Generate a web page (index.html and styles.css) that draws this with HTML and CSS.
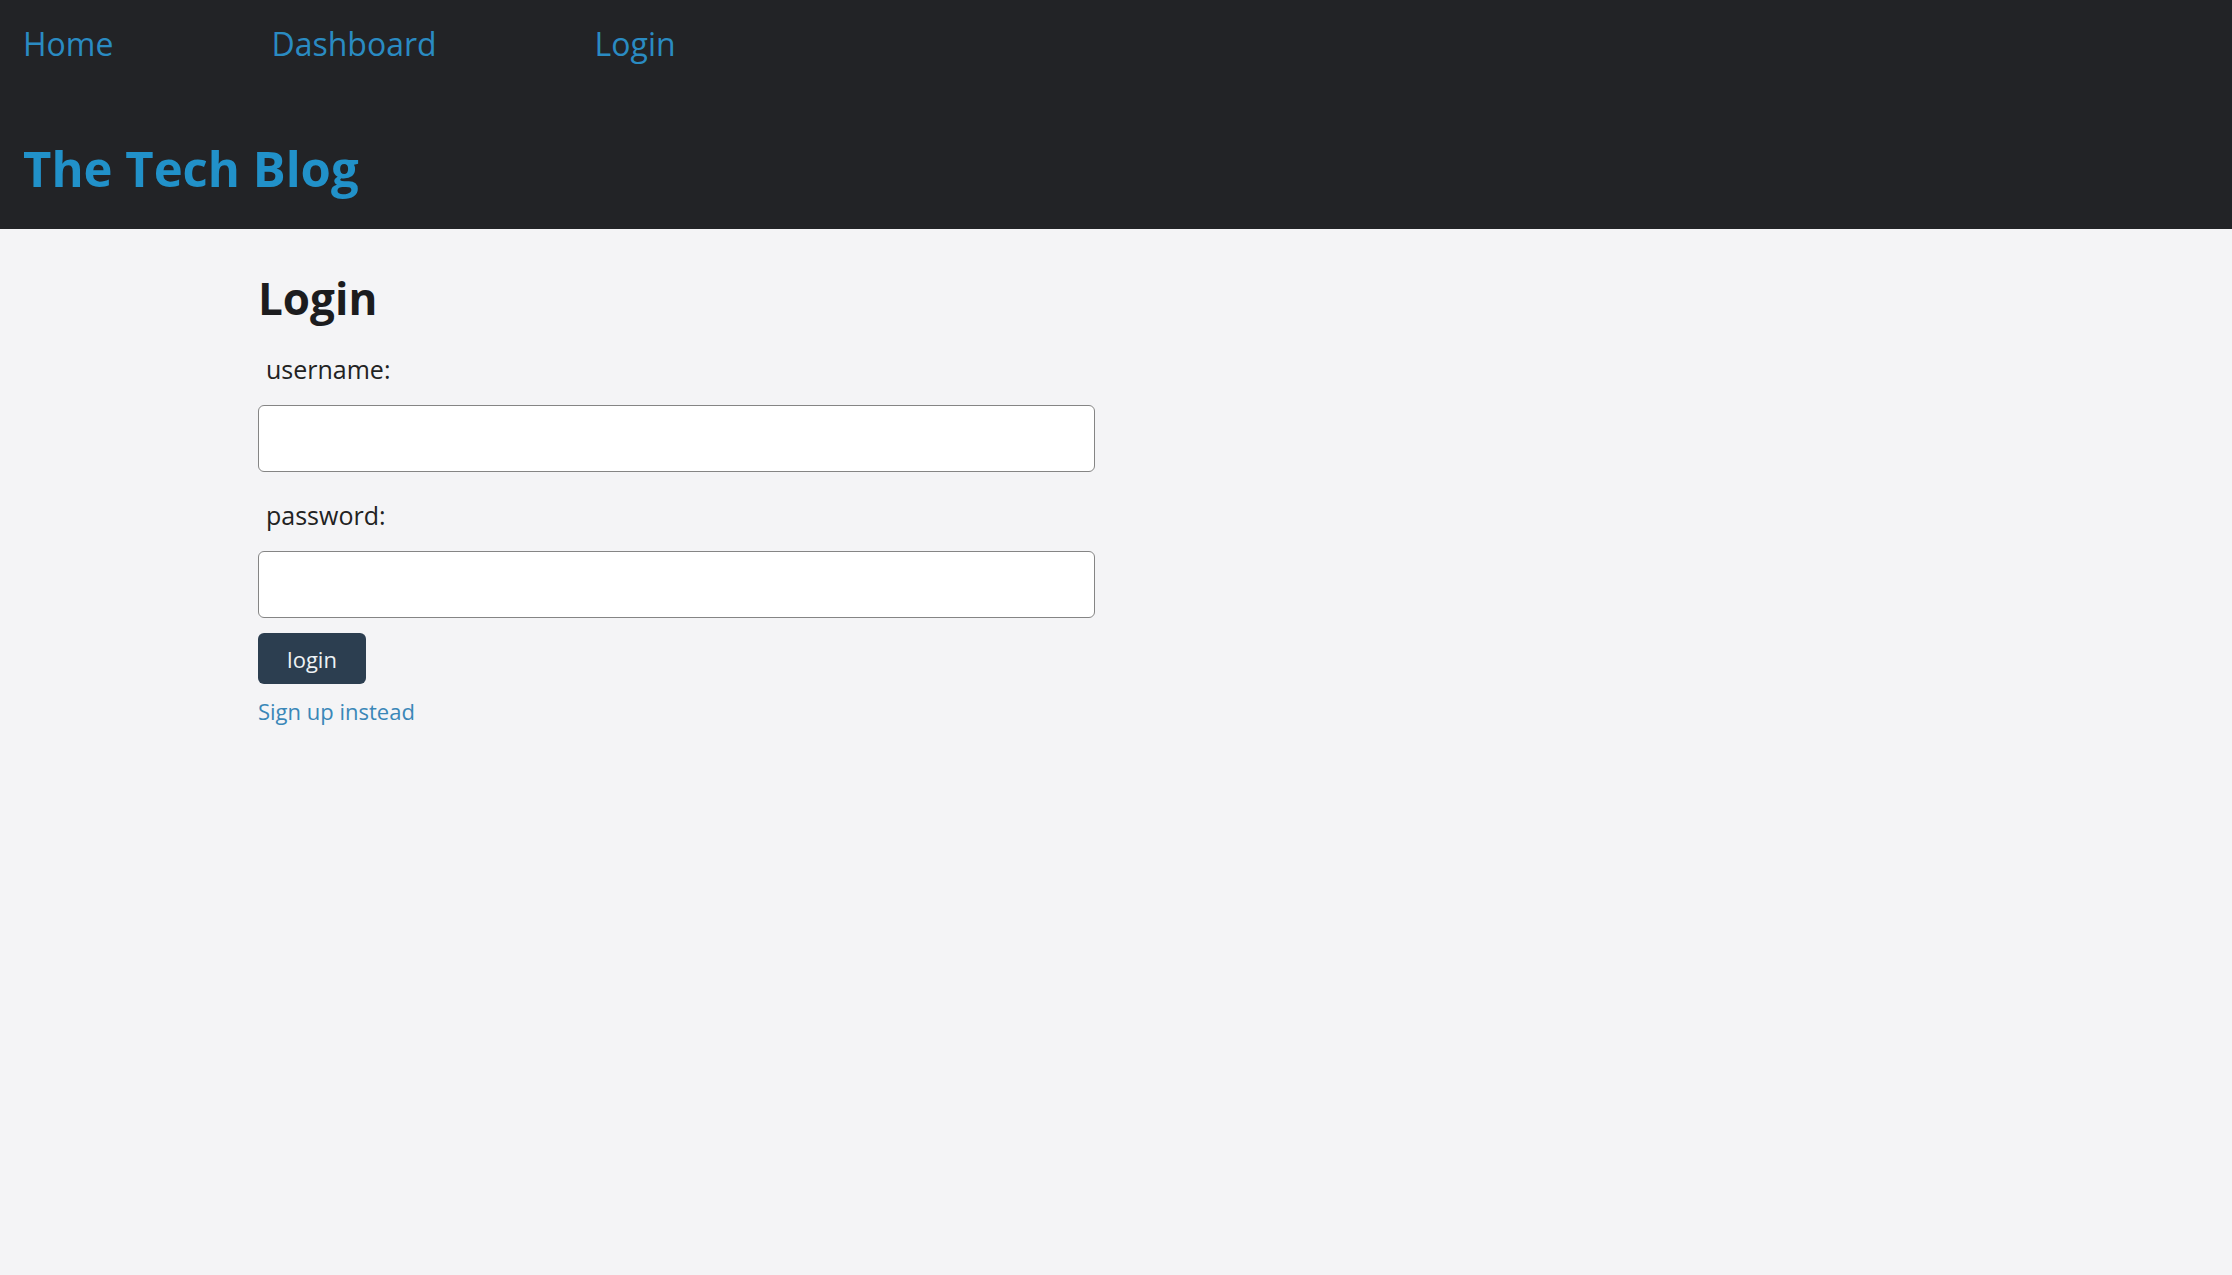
FILE: index.html
```html
<!DOCTYPE html>
<html lang="en">
<head>
<meta charset="utf-8">
<title>The Tech Blog</title>
<link rel="stylesheet" href="styles.css">
</head>
<body>
<header class="site-header">
  <nav class="nav">
    <a class="nav-link" href="#">Home</a>
    <a class="nav-link" href="#">Dashboard</a>
    <a class="nav-link" href="#">Login</a>
  </nav>
  <h1 class="site-title">The Tech Blog</h1>
</header>
<main class="content">
  <h2 class="page-title">Login</h2>
  <form class="login-form">
    <label class="field-label" for="username">username:</label>
    <input class="field-input" id="username" type="text">
    <label class="field-label" for="password">password:</label>
    <input class="field-input" id="password" type="password">
    <button class="btn" type="submit">login</button>
  </form>
  <a class="alt-link" href="#">Sign up instead</a>
</main>
</body>
</html>
```
FILE: styles.css
```css
html, body {
  margin: 0;
  padding: 0;
}
body {
  background: #f4f4f6;
  font-family: "Open Sans", "Noto Sans", sans-serif;
  color: #1f1f21;
  min-height: 1275px;
}
.site-header {
  background: #222326;
  height: 229px;
  box-sizing: border-box;
  padding: 15px 0 0 23px;
}
.nav {
  display: flex;
  gap: 158px;
}
.nav-link {
  color: #2a8bc2;
  text-decoration: none;
  font-size: 32px;
  line-height: 58px;
}
.site-title {
  margin: 65px 0 0 0;
  color: #2191c9;
  font-size: 49px;
  font-weight: 700;
  line-height: 60px;
}
.content {
  padding: 0 0 0 258px;
}
.page-title {
  margin: 0;
  padding-top: 41px;
  font-size: 44px;
  font-weight: 700;
  line-height: 56px;
  color: #1c1c1e;
}
.login-form {
  display: flex;
  flex-direction: column;
  align-items: flex-start;
  width: 837px;
}
.field-label {
  font-size: 25px;
  line-height: 36px;
  margin: 25px 0 0 8px;
  color: #222;
}
.field-input {
  box-sizing: border-box;
  width: 837px;
  height: 67px;
  margin: 18px 0 0 0;
  border: 1.5px solid #858585;
  border-radius: 6px;
  background: #fff;
  font: inherit;
}
.btn {
  margin-top: 15px;
  width: 108px;
  height: 51px;
  border: 0;
  border-radius: 6px;
  background: #2c3e50;
  color: #eef2f5;
  font-family: inherit;
  font-size: 22px;
  padding: 0;
}
.alt-link {
  display: inline-block;
  margin-top: 12px;
  color: #3a87b8;
  text-decoration: none;
  font-size: 22px;
  line-height: 30px;
}
```
